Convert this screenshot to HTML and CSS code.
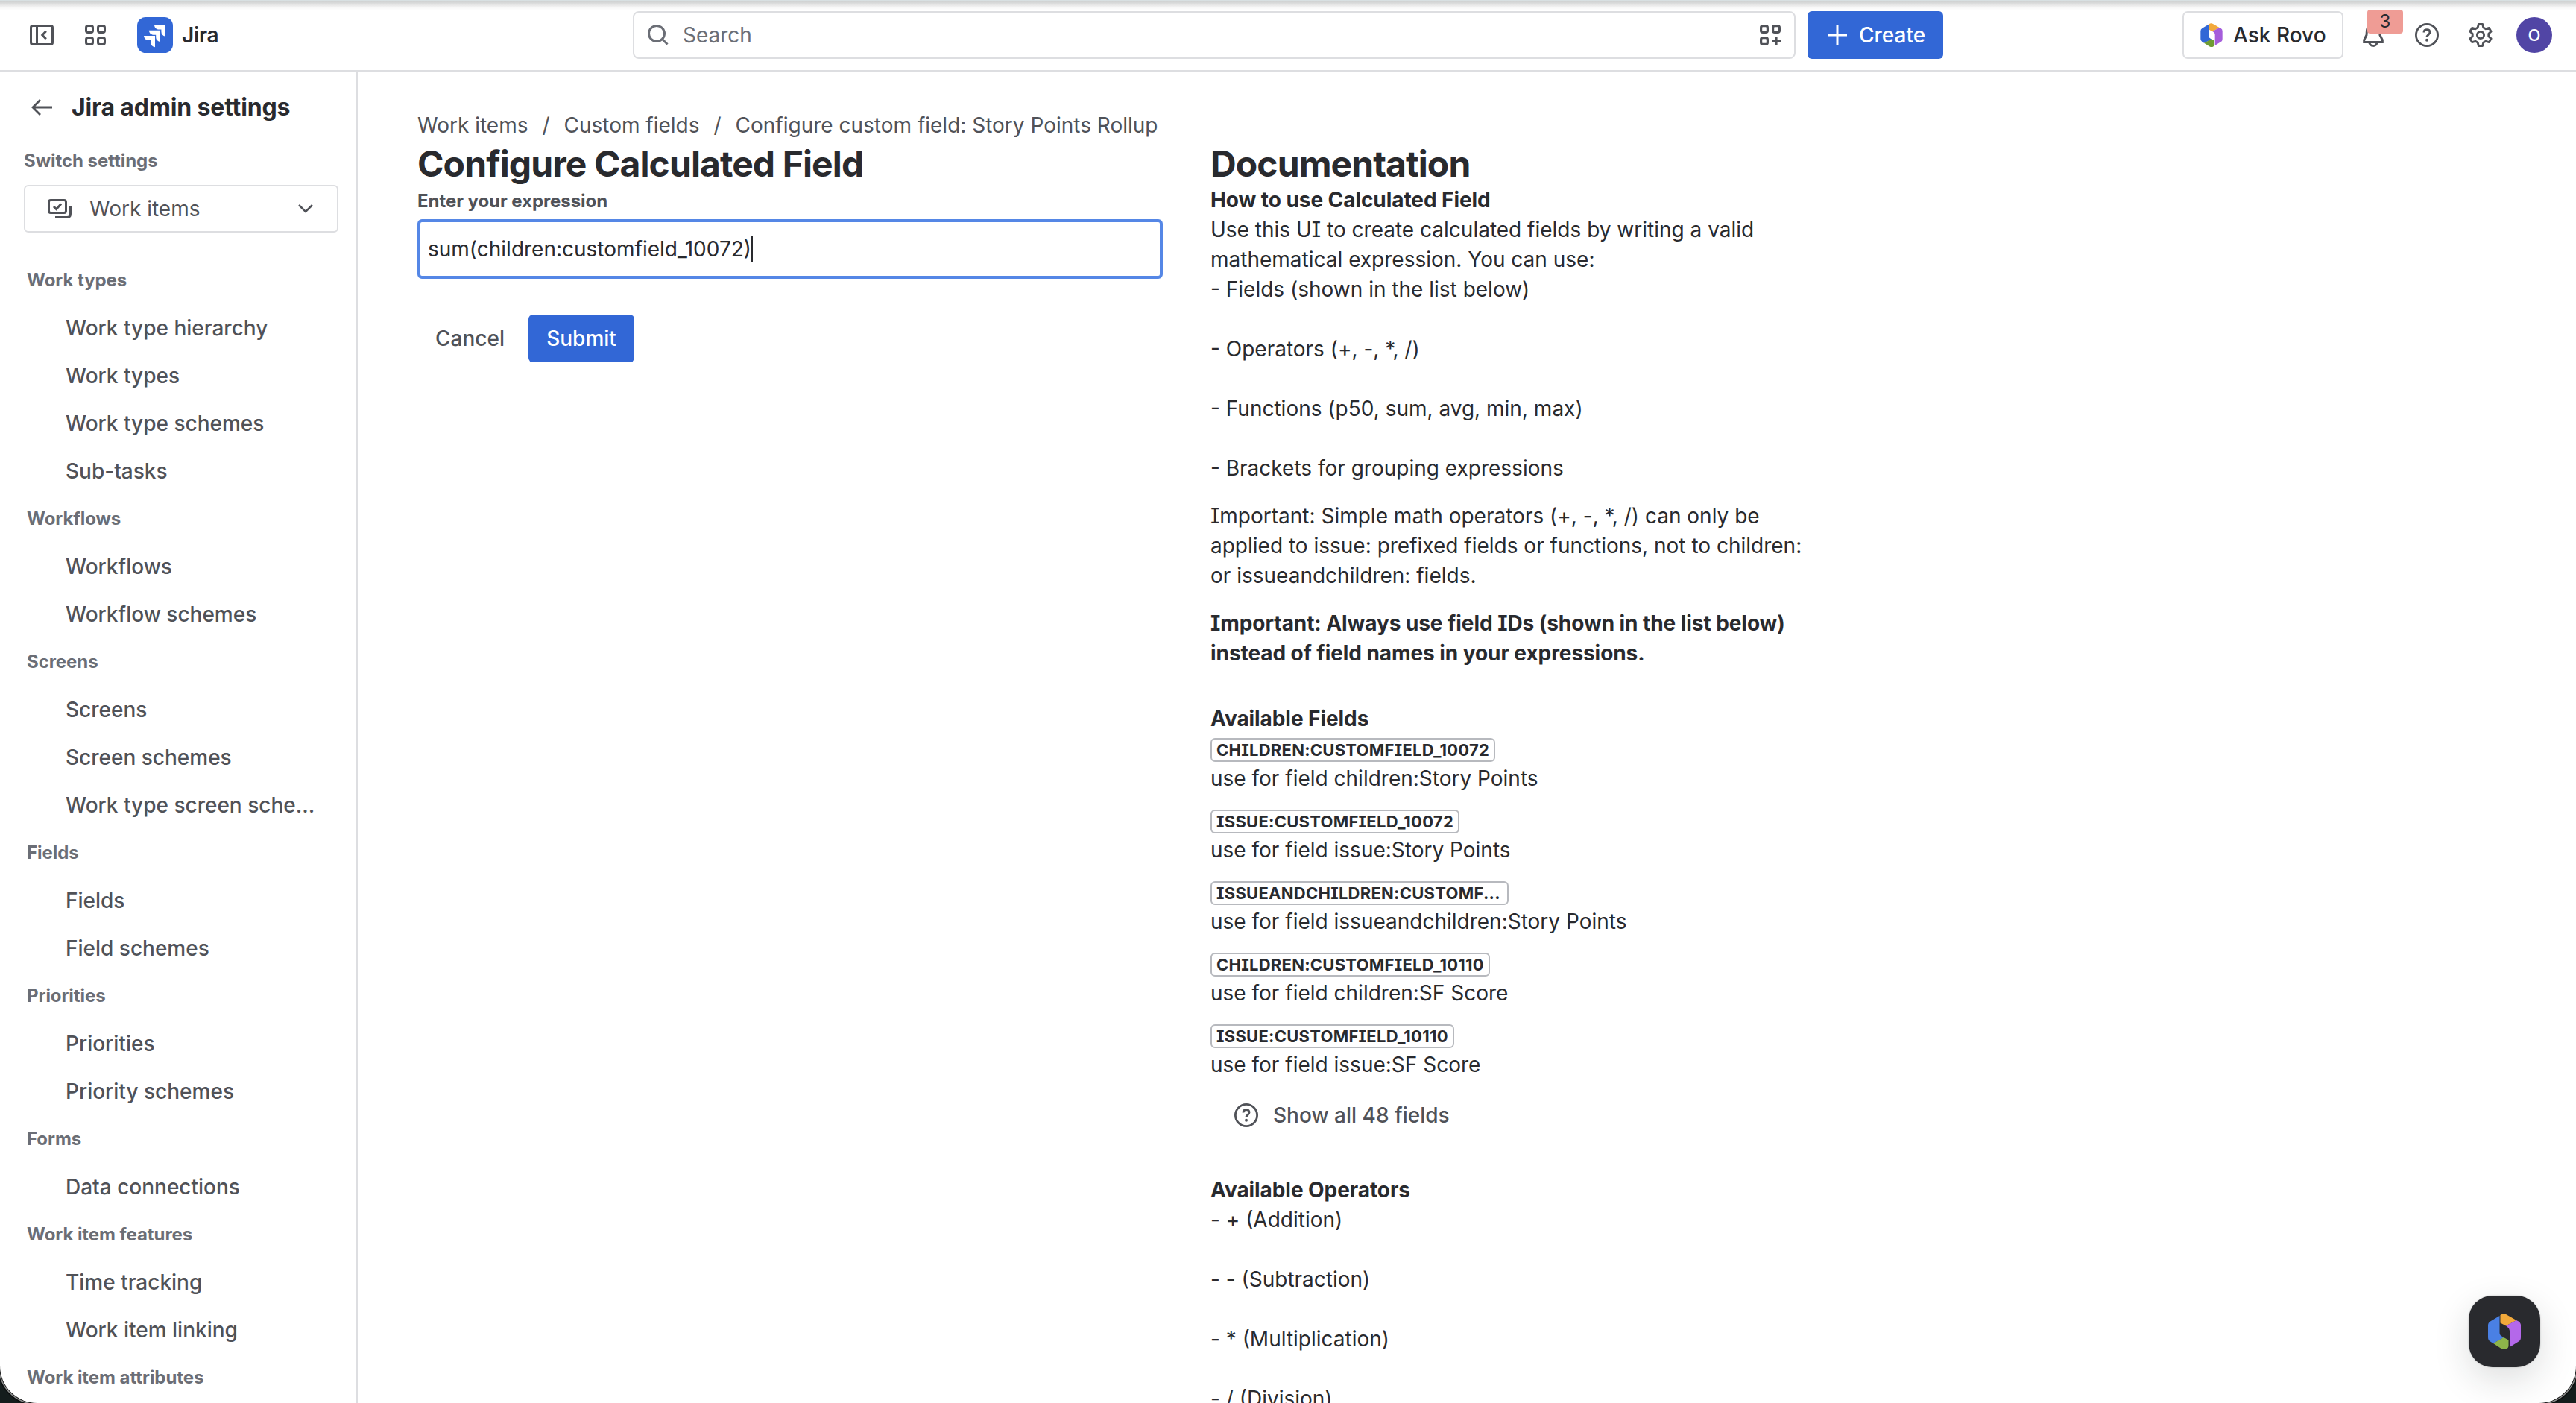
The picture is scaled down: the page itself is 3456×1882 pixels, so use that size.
FILE: index.html
```html
<!DOCTYPE html>
<html lang="en">
<head>
<meta charset="utf-8">
<title>Jira admin settings</title>
<link rel="stylesheet" href="styles.css">
</head>
<body>
<svg class="sprite" width="0" height="0">
  <symbol id="help" viewBox="0 0 32 32"><circle cx="16" cy="16" r="14.6" fill="none" stroke="currentColor" stroke-width="2.8"/><path d="M12 12.6C12 10 13.700 8.600 16 8.600s4 1.400 4 3.700c0 3-4 3.200-4 6.700" fill="none" stroke="currentColor" stroke-width="2.900"/><circle cx="16" cy="22.800" r="2" fill="currentColor"/></symbol>
</svg>
<div class="window">
  <header class="topbar">
    <div class="brand">
      <svg class="i-panel" width="32" height="28" viewBox="0 0 32 28" fill="none" stroke="currentColor" stroke-width="3"><rect x="1.500" y="1.500" width="29" height="25" rx="2.500"/><path d="M9.500 1.500v25M21.800 8.700l-5 5.300 5 5.300"/></svg>
      <svg class="i-grid" width="28" height="28" viewBox="0 0 28 28" fill="none" stroke="currentColor" stroke-width="3"><rect x="1.500" y="1.500" width="9" height="9" rx="2.500"/><rect x="17.500" y="1.500" width="9" height="9" rx="2.500"/><rect x="1.500" y="17.500" width="9" height="9" rx="2.500"/><rect x="17.500" y="17.500" width="9" height="9" rx="2.500"/></svg>
      <svg class="i-logo" width="48" height="48" viewBox="0 0 48 48"><rect width="48" height="48" rx="11.500" fill="#3267d6"/><g fill="#fff"><path d="M23 10.700h15v15c-3.700-.6-5.600-3-5.600-6.500v-2.600h-2.800c-3.800 0-6.100-2.200-6.600-5.900z"/><path d="M15.800 17.800h15.200v15.200c-3.800-.6-5.800-3-5.800-6.500v-2.700h-2.800c-3.800 0-6.100-2.300-6.600-6z"/><path d="M9 25h15v15.300c-3.700-.6-5.600-3-5.600-6.600V31h-2.800c-3.800 0-6.100-2.300-6.600-6z"/></g></svg>
      <span class="brand-name">Jira</span>
    </div>
    <div class="search">
      <svg width="28" height="28" viewBox="0 0 28 28" fill="none" stroke="#6b6e76" stroke-width="3"><circle cx="12" cy="12" r="10.500"/><path d="M19.500 19.500l7 7"/></svg>
      <span>Search</span>
      <svg class="i-apps" width="28" height="28" viewBox="0 0 28 28" fill="none" stroke="#505258" stroke-width="3.200"><rect x="1.600" y="1.600" width="8.800" height="8.800" rx="2.500"/><rect x="17.600" y="1.600" width="8.800" height="8.800" rx="2.500"/><rect x="1.600" y="17.600" width="8.800" height="8.800" rx="2.500"/><path d="M22 16v12M16 22h12"/></svg>
    </div>
    <div class="create"><svg width="26" height="26" viewBox="0 0 26 26" stroke="#fff" stroke-width="3"><path d="M13 0v26M0 13h26"/></svg><span>Create</span></div>
    <div class="actions">
      <div class="rovo"><svg width="30" height="32" viewBox="0 0 44 48"><path fill="#3267d6" d="M16 2.500v22.500q0 3.500 3 5.500l3 2L7 40l-4-2.500Q0 35.500 0 32V16q0-4 3-5.500z"/><path fill="#f2a93b" d="M17 2Q21-1 25 1.500L38 9 24 17l-7-4z"/><path fill="#a55ddb" d="M38 9l3 1.500q3 2 3 5.500v16q0 4-3 5.500L29 45V23q0-3-3-5l-2-1.500z"/><path fill="#6f9c34" d="M7 40l15-8 6 3.500V43q0 3-3 4.500-3 1-6 0z"/></svg><span>Ask Rovo</span></div>
      <div class="bell"><svg width="28" height="32" viewBox="0 0 28 32" fill="none" stroke="currentColor" stroke-width="3"><path d="M14 1.500C9 1.500 6 4.500 5.500 9.500L5 16l-3.300 6.700v2.800h24.600v-2.800L23 16l-.5-6.500C22 4.500 19 1.500 14 1.500zM8.500 25.500c.8 3.200 2.800 5 5.500 5s4.700-1.800 5.500-5"/></svg><span class="badge">3</span></div>
      <svg class="i-help" width="32" height="32"><use href="#help"/></svg>
      <svg class="i-gear" width="32" height="32" viewBox="0 0 32 32" fill="none" stroke="currentColor" stroke-width="2.900" stroke-linejoin="round"><path d="M13.300 1.500h5.400l1.100 4.400 3.200 1.800 4.400-1.300 2.700 4.700-3.300 3.100v3.600l3.300 3.100-2.700 4.700-4.400-1.300-3.200 1.800-1.100 4.400h-5.400l-1.100-4.400-3.200-1.800-4.400 1.300-2.700-4.700 3.300-3.100v-3.600l-3.300-3.100 2.700-4.700 4.400 1.300 3.200-1.800z"/><circle cx="16" cy="16" r="4.600"/></svg>
      <span class="avatar">O</span>
    </div>
  </header>
  <div class="body">
    <nav class="sidebar">
      <div class="side-head"><svg width="28" height="22" viewBox="0 0 28 22" fill="none" stroke="currentColor" stroke-width="2.800"><path d="M28 11H2.500M12 1L2 11l10 10"/></svg><h2>Jira admin settings</h2></div>
      <div class="switch-label">Switch settings</div>
      <div class="select">
        <svg width="32" height="26" viewBox="0 0 32 26" fill="none" stroke="currentColor" stroke-width="3"><rect x="1.500" y="1.500" width="23" height="17" rx="2.500"/><path d="M8 10l3.500 3.500L18 6.500M30.500 10v10q0 4.500-4.500 4.500H10"/></svg>
        <span>Work items</span>
        <svg class="i-chev" width="20" height="12" viewBox="0 0 20 12" fill="none" stroke="currentColor" stroke-width="2.600"><path d="M1 1l9 9 9-9"/></svg>
      </div>
      <ul class="menu">
        <li class="group">Work types</li><li>Work type hierarchy</li><li>Work types</li><li>Work type schemes</li><li>Sub-tasks</li>
        <li class="group">Workflows</li><li>Workflows</li><li>Workflow schemes</li>
        <li class="group">Screens</li><li>Screens</li><li>Screen schemes</li><li>Work type screen sche...</li>
        <li class="group">Fields</li><li>Fields</li><li>Field schemes</li>
        <li class="group">Priorities</li><li>Priorities</li><li>Priority schemes</li>
        <li class="group">Forms</li><li>Data connections</li>
        <li class="group">Work item features</li><li>Time tracking</li><li>Work item linking</li>
        <li class="group">Work item attributes</li>
      </ul>
    </nav>
    <main class="content">
      <div class="crumbs"><span>Work items</span><i>/</i><span>Custom fields</span><i>/</i><span>Configure custom field: Story Points Rollup</span></div>
      <div class="columns">
        <section class="form">
          <h1>Configure Calculated Field</h1>
          <div class="label">Enter your expression</div>
          <div class="input"><span>sum(children:customfield_10072)</span><span class="caret"></span></div>
          <div class="buttons"><span class="cancel">Cancel</span><span class="submit">Submit</span></div>
        </section>
        <section class="docs">
          <h1>Documentation</h1>
          <h3>How to use Calculated Field</h3>
          <p>Use this UI to create calculated fields by writing a valid<br>mathematical expression. You can use:<br>- Fields (shown in the list below)<br><br>- Operators (+, -, *, /)<br><br>- Functions (p50, sum, avg, min, max)<br><br>- Brackets for grouping expressions</p>
          <p class="para">Important: Simple math operators (+, -, *, /) can only be<br>applied to issue: prefixed fields or functions, not to children:<br>or issueandchildren: fields.</p>
          <p class="para strong">Important: Always use field IDs (shown in the list below)<br>instead of field names in your expressions.</p>
          <h3 class="section">Available Fields</h3>
          <div class="field"><span class="lozenge">CHILDREN:CUSTOMFIELD_10072</span><p>use for field children:Story Points</p></div>
          <div class="field"><span class="lozenge">ISSUE:CUSTOMFIELD_10072</span><p>use for field issue:Story Points</p></div>
          <div class="field"><span class="lozenge cut">ISSUEANDCHILDREN:CUSTOMF...</span><p>use for field issueandchildren:Story Points</p></div>
          <div class="field"><span class="lozenge">CHILDREN:CUSTOMFIELD_10110</span><p>use for field children:SF Score</p></div>
          <div class="field"><span class="lozenge">ISSUE:CUSTOMFIELD_10110</span><p>use for field issue:SF Score</p></div>
          <div class="show-all"><svg width="32" height="32"><use href="#help"/></svg><span>Show all 48 fields</span></div>
          <h3 class="section">Available Operators</h3>
          <p>- + (Addition)<br><br>- - (Subtraction)<br><br>- * (Multiplication)<br><br>- / (Division)</p>
        </section>
      </div>
    </main>
  </div>
  <div class="fab"><svg width="44" height="48" viewBox="0 0 44 48"><path fill="#4a80e4" d="M15.500 3v22.500q0 3.500 3 5l3 1.500L7 40l-4-2.500Q0 35.500 0 32V16q0-4 3-5.500z"/><path fill="#f2a93b" d="M16.500 2Q21-1 25 1.500L38 9 24 16.500l-7.500-4z"/><path fill="#b468ea" d="M38 9l3 1.500q3 2 3 5.500v16q0 4-3 5.500L29 45V23q0-3-3-5l-2-1.500z"/><path fill="#8db54a" d="M7 40l14-8 6.500 3.500V43q0 3-3 4.500-3 1-6 0z"/></svg></div>
</div>
</body>
</html>
```
FILE: styles.css
```css
* { box-sizing: border-box; }
html, body { margin: 0; height: 100%; overflow: hidden; }
body { background: #141c1c; font: 400 28px/40px Inter, "Liberation Sans", sans-serif; font-feature-settings: "cv08"; color: #292a2e; }
h1, h2, h3, p, ul { margin: 0; padding: 0; }
svg { display: block; flex: none; }
.sprite { position: absolute; }
.window { position: relative; width: 3456px; height: 1882px; overflow: hidden; background: #fff; border-radius: 0 0 50px 50px; box-shadow: 0 0 0 1px #1a1a1a, 0 0 0 2.5px #8e9090, 0 0 0 4px #0c0e0e; display: flex; flex-direction: column; }

.topbar { height: 96px; flex: none; display: flex; align-items: flex-start; padding: 15px 32px 0 40px; border-bottom: 2px solid #dddee1; color: #505258; background: linear-gradient(#d8e0e2 0 1px, #cfd1d1 2px, #e3e3e3 6px, #f7f7f7 10px, #fff 14px); font-weight: 500; }
.topbar > div { height: 64px; display: flex; align-items: center; white-space: nowrap; flex: none; }
.brand { width: 809px; }
.i-grid { margin-left: 42px; }
.i-logo { margin-left: 42px; }
.brand-name { margin-left: 12px; font-weight: 600; letter-spacing: -.3px; color: #292a2e; }
.search { width: 1560px; padding: 0 18px; border: 2px solid #dddee1; border-radius: 8px; background: #fff; color: #6b6e76; font-weight: 400; }
.search span { margin-left: 19px; }
.i-apps { margin-left: auto; }
.create { width: 182px; margin-left: 16px; padding-left: 27px; background: #3267d6; border-radius: 6px; color: #fff; }
.create span { margin-left: 16px; }
.actions { margin-left: auto; }
.rovo { width: 216px; height: 64px; border: 2px solid #dddee1; border-radius: 7px; padding-left: 22px; display: flex; align-items: center; background: #fff; color: #292a2e; }
.rovo span { margin-left: 14px; }
.bell { position: relative; margin-left: 26px; }
.badge { position: absolute; left: 6px; top: -18px; width: 48px; height: 32px; border-radius: 4px; background: #ef9c95; color: #292a2e; text-align: center; font: 400 24px/32px Inter, sans-serif; }
.i-help { margin-left: 42px; }
.i-gear { margin-left: 40px; }
.avatar { margin-left: 32px; width: 48px; height: 48px; border-radius: 50%; background: #5145a5; color: #fff; text-align: center; font-size: 22px; line-height: 49px; }

.body { flex: 1; min-height: 0; display: flex; }
.sidebar { width: 480px; flex: none; border-right: 2px solid #dddee1; color: #505258; }
.side-head { height: 96px; padding-left: 42px; display: flex; align-items: center; }
.side-head h2 { margin-left: 26px; font-size: 32px; font-weight: 653; letter-spacing: -.16px; color: #292a2e; white-space: nowrap; }
.switch-label { height: 56px; padding-left: 32px; font-size: 24px; line-height: 48px; font-weight: 653; letter-spacing: -.06px; color: #6b6e76; }
.select { margin-left: 32px; width: 422px; height: 64px; border: 2px solid #dddee1; border-radius: 6px; display: flex; align-items: center; padding: 0 32px 0 30px; }
.select span { margin-left: 24px; }
.i-chev { margin-left: auto; }
.menu { list-style: none; margin-top: 32px; font-weight: 500; }
.menu li { height: 64px; line-height: 64px; padding-left: 88px; white-space: nowrap; }
.menu .group { padding-left: 36px; font-size: 24px; font-weight: 653; letter-spacing: -.06px; color: #6b6e76; }

.content { padding: 48px 0 0 80px; }
.crumbs { height: 48px; line-height: 48px; display: flex; color: #505258; white-space: nowrap; }
.crumbs i { font-style: normal; width: 48px; text-align: center; }
.columns { display: flex; gap: 64px; }
h1 { font-size: 48px; line-height: 56px; font-weight: 653; letter-spacing: -.9px; white-space: nowrap; }
.form { width: 1000px; }
.label { height: 46px; line-height: 44px; font-size: 24px; font-weight: 653; letter-spacing: -.06px; color: #505258; }
.input { height: 80px; border: 4px solid #5587e6; border-radius: 6px; display: flex; align-items: center; padding: 0 10px; }
.caret { width: 2px; height: 34px; background: #292a2e; }
.buttons { margin-top: 48px; display: flex; font-weight: 500; line-height: 64px; }
.cancel { width: 149px; padding-left: 24px; color: #505258; }
.submit { width: 142px; height: 64px; text-align: center; background: #3267d6; color: #fff; border-radius: 6px; }
.docs { white-space: nowrap; }
h3 { font-size: 28px; line-height: 40px; font-weight: 653; letter-spacing: -.07px; }
.para { margin-top: 24px; }
.strong { font-weight: 653; letter-spacing: -.07px; }
.section { margin-top: 48px; }
.field { padding-top: 6px; height: 96px; }
.lozenge { display: block; width: max-content; height: 32px; border: 2px solid #b7b9be; border-radius: 6px; padding: 0 6px; font-size: 22px; line-height: 28px; font-weight: 700; letter-spacing: .26px; }
.cut { width: 400px; }
.field p { margin-top: 2px; }
.show-all { height: 64px; padding-left: 32px; display: flex; align-items: center; color: #505258; font-weight: 500; }
.show-all span { margin-left: 20px; }

.fab { position: absolute; right: 48px; bottom: 48px; width: 96px; height: 96px; border-radius: 32px; background: #292a2e; display: flex; align-items: center; justify-content: center; box-shadow: 0 16px 48px rgba(30,31,33,.15), 0 0 2px rgba(30,31,33,.3); }
```
